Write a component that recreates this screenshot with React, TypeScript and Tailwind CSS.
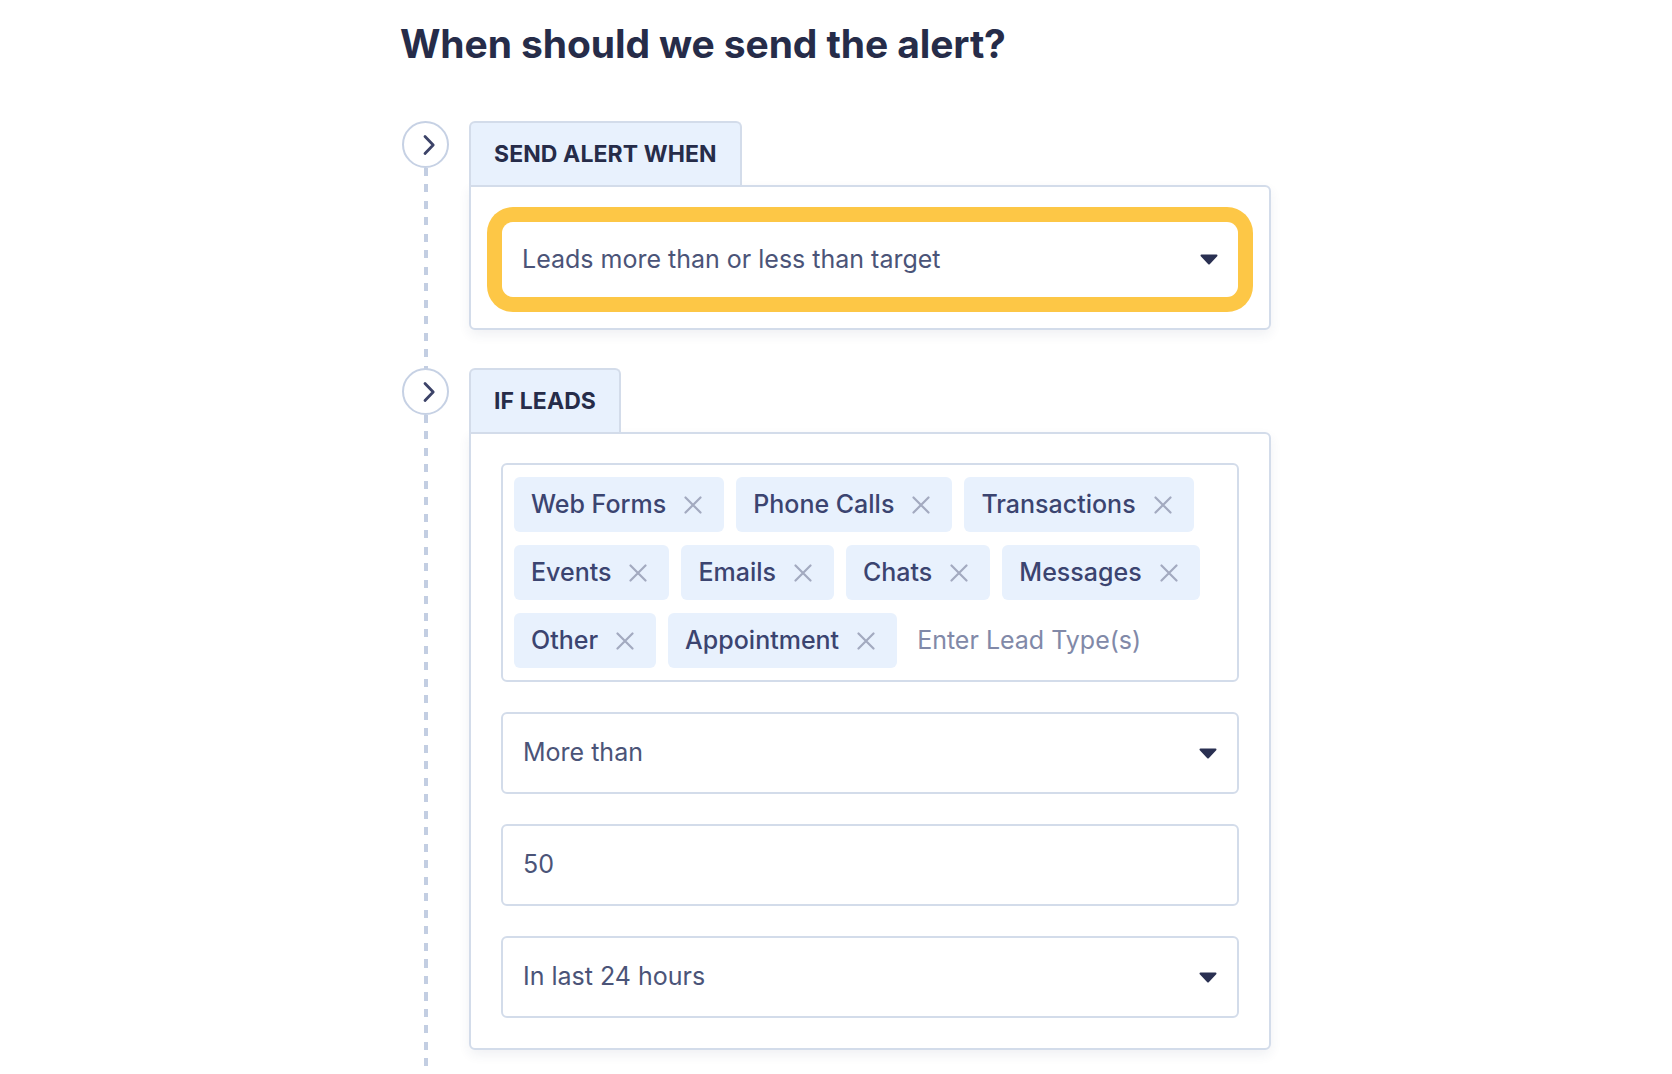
import React from "react";

const leadTypes = [
    "Web Forms",
    "Phone Calls",
    "Transactions",
    "Events",
    "Emails",
    "Chats",
    "Messages",
    "Other",
    "Appointment",
];

function Chevron() {
    return (
        <svg width="14" height="22" viewBox="0 0 14 22" fill="none" className="translate-x-[3px]">
            <path d="M3 2.5 L11.2 11 L3 19.5" stroke="#3c4368" strokeWidth="2.8" strokeLinecap="round" strokeLinejoin="round" />
        </svg>
    );
}

function Caret() {
    return (
        <svg width="18" height="11" viewBox="0 0 18 11" fill="none">
            <path d="M1.5 1.5 H16.5 L9 9.5 Z" fill="#2a3052" stroke="#2a3052" strokeWidth="2" strokeLinejoin="round" />
        </svg>
    );
}

function CloseX() {
    return (
        <svg width="18" height="18" viewBox="0 0 18 18" fill="none">
            <path d="M1.5 1.5 L16.5 16.5 M16.5 1.5 L1.5 16.5" stroke="#a3aac0" strokeWidth="2.2" strokeLinecap="round" />
        </svg>
    );
}

function Step({ label, last, children }: { label: string; last?: boolean; children: React.ReactNode }) {
    return (
        <div className={`flex gap-[20px] ${last ? "pb-[60px]" : "pb-[38px]"}`}>
            {/* Timeline */}
            <div className="ml-[2px] w-[47px] flex flex-col items-center shrink-0">
                <div className="w-[47px] h-[47px] rounded-full border-2 border-[#c6d1e4] bg-white flex items-center justify-center shrink-0">
                    <Chevron />
                </div>
                <div className={`w-[4px] flex-1 bg-[image:repeating-linear-gradient(to_bottom,#c3cee2_0px,#c3cee2_8px,transparent_8px,transparent_16.5px)] ${last ? "-mb-[60px]" : "-mb-[40px]"}`} />
            </div>

            {/* Body */}
            <div className="w-[802px]">
                <div className="inline-flex h-[64px] items-center px-[23px] bg-[#e8f1fd] border-2 border-b-0 border-[#d3dcea] rounded-t-[6px]">
                    <span className="text-[23px] font-bold text-[#262c49] tracking-[0.1px]">{label}</span>
                </div>
                <div className="border-2 border-[#d3dcea] rounded-[6px] rounded-tl-none bg-white shadow-[0_5px_12px_rgba(40,60,100,0.07)]">
                    {children}
                </div>
            </div>
        </div>
    );
}

function SelectField({ value }: { value: string }) {
    return (
        <div className="h-[82px] border-2 border-[#d3dcea] rounded-[6px] flex items-center justify-between pl-[20px] pr-[20px]">
            <span className="text-[25px] text-[#4b5478]">{value}</span>
            <Caret />
        </div>
    );
}

export default function App() {
    return (
        <div className="min-h-screen bg-white pl-[400px] font-['Inter',sans-serif] overflow-hidden">
            <h1 className="pt-[20px] text-[39px] leading-[48px] font-bold text-[#262c49] tracking-[-0.1px]">
                When should we send the alert?
            </h1>

            <div className="mt-[53px]">
                <Step label="SEND ALERT WHEN">
                    <div className="pt-[20px] pb-[16px] px-[16px]">
                        <div className="rounded-[26px] bg-[#fdc746] p-[15px]">
                            <div className="h-[75px] rounded-[11px] bg-white flex items-center justify-between pl-[20px] pr-[20px]">
                                <span className="text-[25px] text-[#4b5478]">Leads more than or less than target</span>
                                <Caret />
                            </div>
                        </div>
                    </div>
                </Step>

                <Step label="IF LEADS" last>
                    <div className="pt-[29px] pb-[30px] px-[30px] flex flex-col gap-[30px]">
                        <div className="border-2 border-[#d3dcea] rounded-[6px] pt-[12px] pb-[12px] pl-[11px] pr-[11px] flex flex-wrap gap-x-[12px] gap-y-[13px]">
                            {leadTypes.map((t) => (
                                <div key={t} className="h-[55px] rounded-[6px] bg-[#e8f1fd] pl-[17px] pr-[22px] flex items-center gap-[18px]">
                                    <span className="text-[25px] font-medium text-[#3b4470]">{t}</span>
                                    <CloseX />
                                </div>
                            ))}
                            <div className="h-[55px] flex items-center pl-[8px]">
                                <span className="text-[25px] text-[#8189a8]">Enter Lead Type(s)</span>
                            </div>
                        </div>
                        <SelectField value="More than" />
                        <div className="h-[82px] border-2 border-[#d3dcea] rounded-[6px] flex items-center pl-[20px]">
                            <span className="text-[25px] text-[#4b5478]">50</span>
                        </div>
                        <SelectField value="In last 24 hours" />
                    </div>
                </Step>
            </div>
        </div>
    );
}
